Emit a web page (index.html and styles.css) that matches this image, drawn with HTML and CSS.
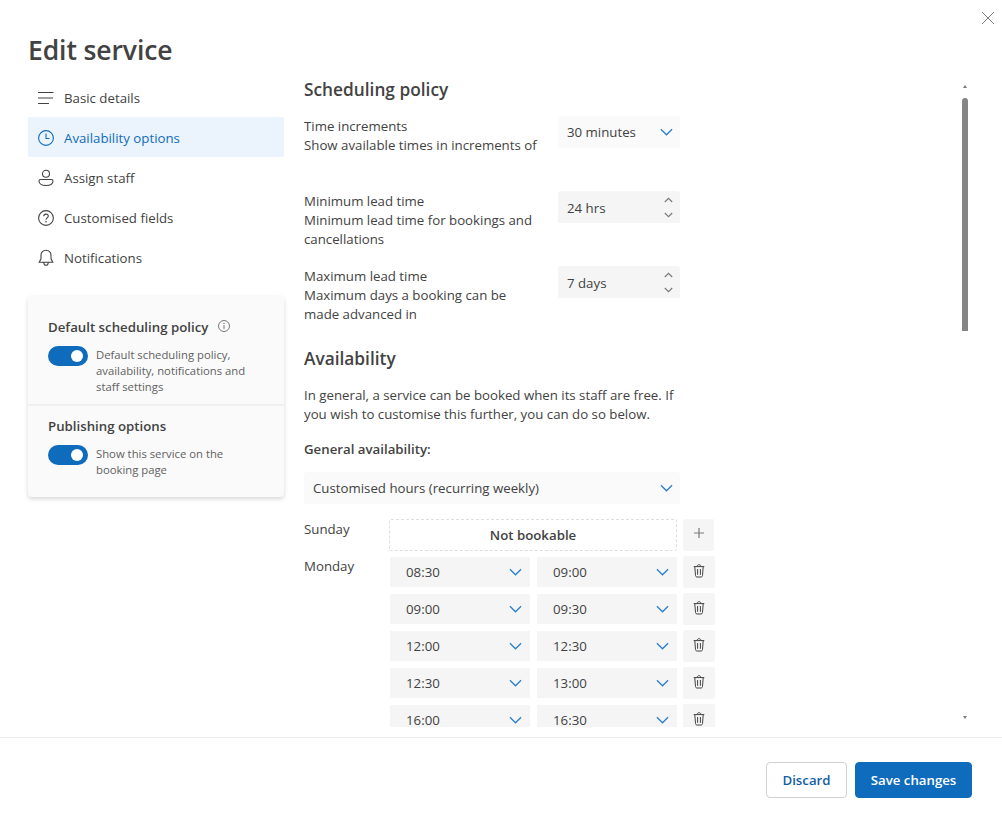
FILE: index.html
```html
<!DOCTYPE html>
<html lang="en">
<head>
    <meta charset="UTF-8">
    <title>Edit service</title>
    <link rel="stylesheet" href="styles.css">
</head>
<body>
    <svg class="defs" width="0" height="0">
        <symbol id="chev" viewBox="0 0 14 8"><path d="M1 1l6 6 6-6" fill="none" stroke="currentColor" stroke-width="1.4"/></symbol>
        <symbol id="trash" viewBox="0 0 12 14"><path d="M4.3 2.2C4.4 1 5 .7 6 .7s1.600.3 1.700 1.500M.7 2.600h10.600M1.800 2.800l.7 8.700c.1.900.6 1.500 1.500 1.500h4c.9 0 1.400-.6 1.500-1.500l.7-8.700M4.600 5v5.800M7.400 5v5.800" fill="none" stroke="currentColor" stroke-width="1"/></symbol>
    </svg>

    <button class="close" aria-label="Close">
        <svg width="14" height="14" viewBox="0 0 14 14"><path d="M1 1l12 12M13 1L1 13" stroke="#7f7f7f" stroke-width="1" fill="none"/></svg>
    </button>

    <div class="main">
        <div class="side">
            <h1>Edit service</h1>
            <nav>
                <a class="nav-item">
                    <svg width="18" height="18" viewBox="0 0 18 18"><path d="M1 3.500h15.500M1 9h15M1 14.500h11" stroke="currentColor" stroke-width="1.100" fill="none"/></svg>
                    Basic details
                </a>
                <a class="nav-item active">
                    <svg width="18" height="18" viewBox="0 0 18 18"><circle cx="9" cy="9" r="7.400" stroke="currentColor" stroke-width="1.100" fill="none"/><path d="M9 4.500V9.500H12.500" stroke="currentColor" stroke-width="1.100" fill="none"/></svg>
                    Availability options
                </a>
                <a class="nav-item">
                    <svg width="18" height="18" viewBox="0 0 18 18"><circle cx="9" cy="4.800" r="3.500" stroke="currentColor" stroke-width="1.100" fill="none"/><path d="M3.500 10.500h11c1 0 1.500.6 1.500 1.500 0 2.900-3 4.500-7 4.500s-7-1.600-7-4.500c0-.9.500-1.500 1.500-1.500z" stroke="currentColor" stroke-width="1.100" fill="none"/></svg>
                    Assign staff
                </a>
                <a class="nav-item">
                    <svg width="18" height="18" viewBox="0 0 18 18"><circle cx="9" cy="9" r="7.400" stroke="currentColor" stroke-width="1.100" fill="none"/><path d="M6.700 7.200C6.800 5.800 7.800 5.100 9 5.100s2.300.8 2.300 2c0 1.800-2.300 1.900-2.300 3.700" stroke="currentColor" stroke-width="1.100" fill="none"/><circle cx="9" cy="12.800" r=".8" fill="currentColor"/></svg>
                    Customised fields
                </a>
                <a class="nav-item">
                    <svg width="18" height="18" viewBox="0 0 18 18"><path d="M9 1.200c-3 0-5 2.200-5 5v3.600l-1.800 3.400h13.600L14 9.800V6.200c0-2.800-2-5-5-5zM6.800 13.400c0 1.600 1 2.800 2.200 2.800s2.200-1.200 2.200-2.800" stroke="currentColor" stroke-width="1.100" fill="none"/></svg>
                    Notifications
                </a>
            </nav>

            <div class="card">
                <div class="card-part first">
                    <div class="card-title">Default scheduling policy
                        <svg class="info" width="14" height="14" viewBox="0 0 14 14"><circle cx="7" cy="7" r="5.500" stroke="#6b6b6b" stroke-width=".9" fill="none"/><path d="M7 6.200v3.600" stroke="#6b6b6b"/><circle cx="7" cy="4.400" r=".7" fill="#6b6b6b"/></svg>
                    </div>
                    <div class="toggle-row">
                        <span class="toggle"></span>
                        <p>Default scheduling policy, availability, notifications and staff settings</p>
                    </div>
                </div>
                <div class="card-part">
                    <div class="card-title">Publishing options</div>
                    <div class="toggle-row">
                        <span class="toggle"></span>
                        <p>Show this service on the booking page</p>
                    </div>
                </div>
            </div>
        </div>

        <div class="content">
            <h2 class="first-h">Scheduling policy</h2>

            <div class="setting s-time">
                <div class="setting-text">
                    <div>Time increments</div>
                    <div>Show available times in increments of</div>
                </div>
                <div class="field light">30 minutes <svg class="chev" width="13" height="8"><use href="#chev"/></svg></div>
            </div>

            <div class="setting s-min">
                <div class="setting-text">
                    <div>Minimum lead time</div>
                    <div>Minimum lead time for bookings and cancellations</div>
                </div>
                <div class="field spinner">24 hrs
                    <span class="spin">
                        <svg width="9" height="6" viewBox="0 0 9 6"><path d="M.8 5l3.700-3.700L8.200 5" stroke="#7a7a7a" stroke-width="1.200" fill="none"/></svg>
                        <svg width="9" height="6" viewBox="0 0 9 6"><path d="M.8 1l3.700 3.700L8.200 1" stroke="#7a7a7a" stroke-width="1.200" fill="none"/></svg>
                    </span>
                </div>
            </div>

            <div class="setting s-max">
                <div class="setting-text">
                    <div>Maximum lead time</div>
                    <div>Maximum days a booking can be made advanced in</div>
                </div>
                <div class="field spinner">7 days
                    <span class="spin">
                        <svg width="9" height="6" viewBox="0 0 9 6"><path d="M.8 5l3.700-3.700L8.200 5" stroke="#7a7a7a" stroke-width="1.200" fill="none"/></svg>
                        <svg width="9" height="6" viewBox="0 0 9 6"><path d="M.8 1l3.700 3.700L8.200 1" stroke="#7a7a7a" stroke-width="1.200" fill="none"/></svg>
                    </span>
                </div>
            </div>

            <h2 class="avail-h">Availability</h2>
            <p class="intro">In general, a service can be booked when its staff are free. If you wish to customise this further, you can do so below.</p>
            <div class="general">General availability:</div>
            <div class="field light wide">Customised hours (recurring weekly) <svg class="chev" width="13" height="8"><use href="#chev"/></svg></div>

            <div class="day sunday">
                <div class="day-name">Sunday</div>
                <div class="not-bookable">Not bookable</div>
                <button class="icon-btn plus"><svg width="12" height="12" viewBox="0 0 12 12"><path d="M6 1v10M1 6h10" stroke="#7a7a7a" stroke-width="1.200" fill="none"/></svg></button>
            </div>

            <div class="day">
                <div class="day-name">Monday</div>
                <div class="slots">
                    <div class="slot">
                        <div class="field time">08:30 <svg class="chev" width="13" height="8"><use href="#chev"/></svg></div>
                        <div class="field time">09:00 <svg class="chev" width="13" height="8"><use href="#chev"/></svg></div>
                        <button class="icon-btn"><svg width="12" height="14"><use href="#trash"/></svg></button>
                    </div>
                    <div class="slot">
                        <div class="field time">09:00 <svg class="chev" width="13" height="8"><use href="#chev"/></svg></div>
                        <div class="field time">09:30 <svg class="chev" width="13" height="8"><use href="#chev"/></svg></div>
                        <button class="icon-btn"><svg width="12" height="14"><use href="#trash"/></svg></button>
                    </div>
                    <div class="slot">
                        <div class="field time">12:00 <svg class="chev" width="13" height="8"><use href="#chev"/></svg></div>
                        <div class="field time">12:30 <svg class="chev" width="13" height="8"><use href="#chev"/></svg></div>
                        <button class="icon-btn"><svg width="12" height="14"><use href="#trash"/></svg></button>
                    </div>
                    <div class="slot">
                        <div class="field time">12:30 <svg class="chev" width="13" height="8"><use href="#chev"/></svg></div>
                        <div class="field time">13:00 <svg class="chev" width="13" height="8"><use href="#chev"/></svg></div>
                        <button class="icon-btn"><svg width="12" height="14"><use href="#trash"/></svg></button>
                    </div>
                    <div class="slot">
                        <div class="field time">16:00 <svg class="chev" width="13" height="8"><use href="#chev"/></svg></div>
                        <div class="field time">16:30 <svg class="chev" width="13" height="8"><use href="#chev"/></svg></div>
                        <button class="icon-btn"><svg width="12" height="14"><use href="#trash"/></svg></button>
                    </div>
                </div>
            </div>
        </div>

        <div class="scrollbar">
            <span class="arrow up"></span>
            <span class="thumb"></span>
            <span class="arrow down"></span>
        </div>
    </div>

    <div class="footer">
        <button class="btn">Discard</button>
        <button class="btn primary">Save changes</button>
    </div>
</body>
</html>
```

FILE: styles.css
```css
* {
    box-sizing: border-box;
}

html, body {
    height: 100%;
}

body {
    margin: 0;
    display: flex;
    flex-direction: column;
    position: relative;
    overflow: hidden;
    background: #fff;
    color: #424242;
    font-family: "Open Sans", "Noto Sans", "Liberation Sans", sans-serif;
    font-size: 13.250px;
    line-height: 19px;
}

p {
    margin: 0;
}

button {
    font: inherit;
    border: 0;
    padding: 0;
    cursor: pointer;
}

.defs {
    position: absolute;
}

.close {
    position: absolute;
    top: 11px;
    right: 7px;
    width: 14px;
    height: 14px;
    background: none;
    line-height: 0;
}

.main {
    display: flex;
    height: 737px;
    flex-shrink: 0;
}

/* left column */
.side {
    width: 304px;
    flex-shrink: 0;
    padding-left: 28px;
    padding-right: 20px;
}

h1 {
    margin: 32px 0 9px;
    height: 36px;
    font-size: 26.500px;
    line-height: 36px;
    font-weight: 600;
    letter-spacing: -.1px;
}

.nav-item {
    display: flex;
    align-items: center;
    gap: 9px;
    height: 40px;
    padding-left: 9px;
    padding-top: 2px;
    border-radius: 2px;
}

.nav-item.active {
    background: #ebf3fc;
    color: #0f6cbd;
}

.card {
    margin-top: 19px;
    height: 201px;
    background: #fafafa;
    border-radius: 4px;
    box-shadow: 0 2px 4px rgba(0,0,0,0.16);
}

.card-part {
    padding: 0 20px;
}

.card-part.first {
    height: 110px;
    padding-top: 21px;
    border-bottom: 2px solid #f0f0f0;
}

.card-part + .card-part {
    padding-top: 10px;
}

.card-title {
    display: flex;
    align-items: center;
    font-weight: 600;
    height: 20px;
}

.info {
    margin-left: 9px;
    margin-top: -3px;
}

.toggle-row {
    display: flex;
    gap: 8px;
    margin-top: 9px;
}

.toggle-row p {
    width: 160px;
    margin-top: 1px;
    font-size: 11.300px;
    line-height: 16px;
    color: #616161;
}

.toggle {
    position: relative;
    flex-shrink: 0;
    width: 40px;
    height: 20px;
    border-radius: 10px;
    background: #0f6cbd;
}

.toggle::after {
    content: "";
    position: absolute;
    top: 4px;
    right: 5px;
    width: 12px;
    height: 12px;
    border-radius: 50%;
    background: #fff;
}

/* right column */
.content {
    width: 657px;
    height: 727px;
    overflow: hidden;
    flex-shrink: 0;
}

h2 {
    margin: 0;
    font-size: 17.300px;
    line-height: 26px;
    font-weight: 600;
}

.first-h {
    margin-top: 77px;
}

.setting {
    display: flex;
    width: 376px;
    justify-content: space-between;
    align-items: flex-start;
}

.setting-text {
    width: 234px;
    padding-top: 1px;
}

.s-time {
    margin-top: 13px;
    height: 75px;
}

.s-min {
    height: 75px;
}

.s-max {
    height: 48px;
}

.field {
    display: flex;
    align-items: center;
    justify-content: space-between;
    width: 122px;
    height: 32px;
    padding: 0 7px 0 9px;
    background: #f5f5f5;
    border-radius: 3px 3px 0 0;
}

.field.light {
    background: #fafafa;
}

.field.wide {
    width: 376px;
}

.field.spinner {
    padding-top: 2px;
}

.field.time {
    width: 140px;
    height: 30px;
    padding: 0 8px 0 16px;
    border-radius: 0;
}

.chev {
    color: #2b7ed0;
    flex-shrink: 0;
}

.spin {
    display: flex;
    flex-direction: column;
    gap: 9px;
    line-height: 0;
    margin-top: -2px;
}

.avail-h {
    margin-top: 32px;
}

.intro {
    width: 376px;
    margin-top: 14px;
}

.general {
    margin-top: 16px;
    font-weight: 600;
}

.general + .field {
    margin-top: 13px;
}

.day {
    display: flex;
    margin-top: 5px;
}

.sunday {
    margin-top: 15px;
}

.day-name {
    width: 85px;
    padding-top: 1px;
}

.not-bookable {
    display: flex;
    align-items: center;
    justify-content: center;
    width: 288px;
    height: 32px;
    padding-top: 1px;
    border: 1px dashed #dedede;
    border-radius: 2px;
    font-weight: 600;
}

.icon-btn {
    display: flex;
    align-items: center;
    justify-content: center;
    flex-shrink: 0;
    width: 32px;
    height: 32px;
    margin: -1px 0;
    padding-bottom: 3px;
    background: #f5f5f5;
    border-radius: 2px;
    color: #424242;
}

.plus {
    width: 31px;
    margin: 0 0 0 6px;
    padding-bottom: 5px;
}

.slots {
    display: flex;
    flex-direction: column;
    gap: 7px;
    padding-left: 1px;
    padding-top: 1px;
}

.slot {
    display: flex;
    gap: 7px;
    height: 30px;
}

.slot .icon-btn {
    margin-left: -1px;
}

/* scrollbar */
.scrollbar {
    display: flex;
    flex-direction: column;
    align-items: center;
    width: 8px;
    height: 727px;
}

.thumb {
    width: 6px;
    height: 233px;
    margin-top: 10px;
    border-radius: 3px 3px 0 0;
    background: #858585;
}

.arrow {
    width: 0;
    height: 0;
    border-left: 2px solid transparent;
    border-right: 2px solid transparent;
}

.arrow.up {
    margin-top: 85px;
    border-bottom: 3px solid #7a7a7a;
}

.arrow.down {
    margin-top: 385px;
    border-top: 3px solid #7a7a7a;
}

/* footer */
.footer {
    flex: 1;
    display: flex;
    justify-content: flex-end;
    align-items: flex-start;
    gap: 8px;
    padding: 24px 30px 0 0;
    border-top: 1px solid #ebebeb;
}

.btn {
    width: 81px;
    height: 36px;
    background: #fff;
    border: 1px solid #d1d1d1;
    border-radius: 4px;
    color: #115ea3;
    font-weight: 600;
}

.btn.primary {
    width: 117px;
    background: #0f6cbd;
    border-color: #0f6cbd;
    color: #fff;
}
```
